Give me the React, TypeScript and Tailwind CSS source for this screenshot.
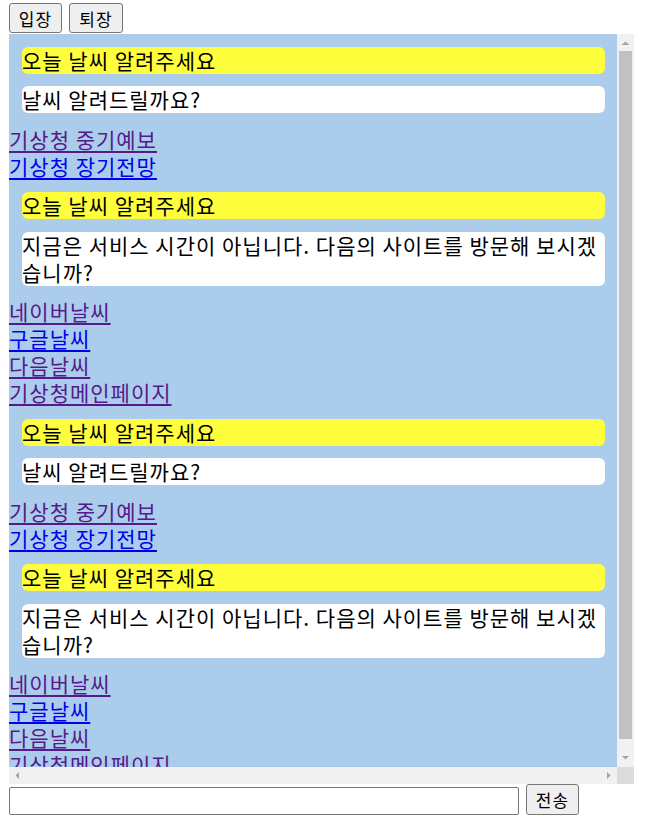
import React from "react";

const font = { fontFamily: '"Noto Sans CJK KR", "Noto Sans", sans-serif' };

type Block = { reply: string; links: { text: string; visited: boolean }[] };

const blocks: Block[] = [
  {
    reply: "날씨 알려드릴까요?",
    links: [
      { text: "기상청 중기예보", visited: true },
      { text: "기상청 장기전망", visited: false },
    ],
  },
  {
    reply: "지금은 서비스 시간이 아닙니다. 다음의 사이트를 방문해 보시겠습니까?",
    links: [
      { text: "네이버날씨", visited: true },
      { text: "구글날씨", visited: false },
      { text: "다음날씨", visited: true },
      { text: "기상청메인페이지", visited: true },
    ],
  },
  {
    reply: "날씨 알려드릴까요?",
    links: [
      { text: "기상청 중기예보", visited: true },
      { text: "기상청 장기전망", visited: false },
    ],
  },
  {
    reply: "지금은 서비스 시간이 아닙니다. 다음의 사이트를 방문해 보시겠습니까?",
    links: [
      { text: "네이버날씨", visited: true },
      { text: "구글날씨", visited: false },
      { text: "다음날씨", visited: true },
      { text: "기상청메인페이지", visited: true },
    ],
  },
];

function Arrow({ points }: { points: string }) {
  return (
    <svg width="17" height="17" viewBox="0 0 17 17" className="block shrink-0">
      <polygon points={points} fill="#a3a3a3" />
    </svg>
  );
}

export default function App() {
  return (
    <div className="px-[9px] pt-[3px] text-black" style={font}>
      <div className="flex gap-[7px]">
        <button className="h-[30px] w-[53px] rounded-[3px] border border-[#767676] bg-[#efefef] text-[17px] leading-none tracking-[1px] text-black">
          입장
        </button>
        <button className="h-[30px] w-[54px] rounded-[3px] border border-[#767676] bg-[#efefef] text-[17px] leading-none tracking-[1px] text-black">
          퇴장
        </button>
      </div>
      <div className="mt-[1px] flex h-[750px] w-[625px] flex-col bg-[#abcdeb]">
        <div className="flex min-h-0 flex-1">
          <div className="min-w-0 flex-1 overflow-hidden text-[21px] leading-[27px] tracking-[1px]">
            <div className="flow-root">
              {blocks.map((b, i) => (
                <div key={i}>
                  <div className="my-[12.5px] ml-[13px] mr-[12px] rounded-[6px] bg-[#fefe3c]">
                    오늘 날씨 알려주세요
                  </div>
                  <div className="my-[12.5px] ml-[13px] mr-[12px] rounded-[6px] bg-white">
                    {b.reply}
                  </div>
                  <div>
                    {b.links.map((l, j) => (
                      <div key={j}>
                        <a
                          href="#"
                          className={
                            l.visited
                              ? "text-[#551a8b] underline decoration-[2px] underline-offset-[3px]"
                              : "text-[#0000ee] underline decoration-[2px] underline-offset-[3px]"
                          }
                        >
                          {l.text}
                        </a>
                      </div>
                    ))}
                  </div>
                </div>
              ))}
            </div>
          </div>
          <div className="flex w-[17px] flex-col bg-[#f1f1f1]">
            <Arrow points="4.5,11 8.5,7.5 12.5,11" />
            <div className="flex-1">
              <div className="mx-[2px] h-[688px] bg-[#c1c1c1]" />
            </div>
            <Arrow points="5,6 12,6 8.5,9.5" />
          </div>
        </div>
        <div className="flex h-[17px] bg-[#f1f1f1]">
          <Arrow points="10,5 10,12 6.5,8.5" />
          <div className="flex-1" />
          <Arrow points="7,5 7,12 10.5,8.5" />
          <div className="h-[17px] w-[17px] bg-[#dcdcdc]" />
        </div>
      </div>
      <div className="flex items-start gap-[7px]">
        <input
          type="text"
          className="mt-[3px] h-[28px] w-[510px] rounded-[2px] border border-[#767676] bg-white px-[2px] text-[16px]"
        />
        <button className="h-[31px] w-[53px] rounded-[3px] border border-[#767676] bg-[#efefef] text-[17px] leading-none tracking-[1px] text-black">
          전송
        </button>
      </div>
    </div>
  );
}
